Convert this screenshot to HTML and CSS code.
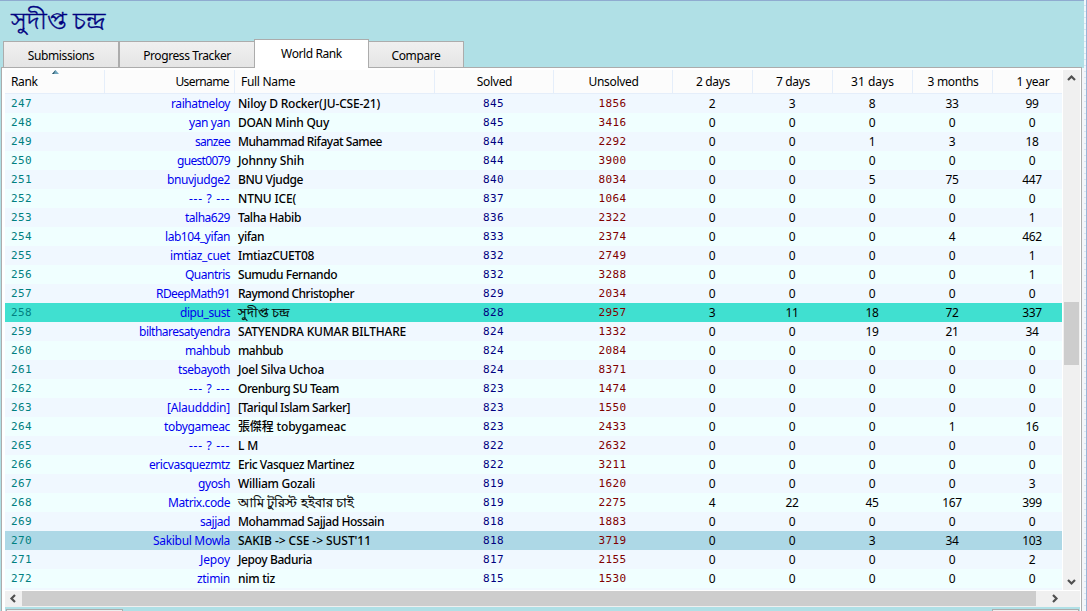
FILE: index.html
```html
<!DOCTYPE html>
<html lang="en">
<head>
<meta charset="utf-8">
<title>World Rank</title>
<link rel="stylesheet" href="styles.css">
</head>
<body>
<div class="window">
  <header class="title" lang="bn">সুদীপ্ত চন্দ্র</header>
  <nav class="tabs">
    <div class="tab tab-submissions">Submissions</div>
    <div class="tab tab-progress">Progress Tracker</div>
    <div class="tab tab-world active">World Rank</div>
    <div class="tab tab-compare">Compare</div>
  </nav>
  <main class="panel">
    <div class="view">
      <section class="table">
        <div class="row head">
          <span class="rank">Rank<svg class="sort" width="7" height="4" viewBox="0 0 7 4"><path d="M3.5 0 7 4H0Z" fill="#6fa5bd"/><path d="M3.5 0 0 4H2Z" fill="#31596b"/></svg></span>
          <span class="user">Username</span>
          <span class="name">Full Name</span>
          <span class="tight">Solved</span>
          <span class="tight">Unsolved</span>
          <span class="tight">2 days</span>
          <span class="tight">7 days</span>
          <span>31 days</span>
          <span class="tight">3 months</span>
          <span class="tight">1 year</span>
        </div>
        <div class="body" id="rows"></div>
      </section>
      <aside class="vbar">
        <svg class="up" width="9" height="8" viewBox="0 0 9 8"><path d="M1 6 4.5 2.5 8 6" fill="none" stroke="#505050" stroke-width="2.2"/></svg>
        <div class="vthumb"></div>
        <svg class="down" width="9" height="8" viewBox="0 0 9 8"><path d="M1 2 4.5 5.5 8 2" fill="none" stroke="#505050" stroke-width="2.2"/></svg>
      </aside>
    </div>
    <div class="hbar">
      <svg class="left" width="8" height="9" viewBox="0 0 8 9"><path d="M6 1 2.5 4.5 6 8" fill="none" stroke="#505050" stroke-width="2.2"/></svg>
      <div class="hthumb"></div>
      <svg class="right" width="8" height="9" viewBox="0 0 8 9"><path d="M2 1 5.5 4.5 2 8" fill="none" stroke="#505050" stroke-width="2.2"/></svg>
    </div>
    <footer class="foot"><div class="foot-left"></div><div class="foot-right"></div></footer>
  </main>
</div>
<script src="rows.js"></script>
</body>
</html>
```
FILE: styles.css
```css
* { box-sizing: border-box; }
body {
  margin: 0;
  width: 1087px;
  height: 611px;
  overflow: hidden;
  font: 12px/19px "Noto Sans", "Open Sans", "Noto Sans CJK TC", sans-serif;
  color: #000;
  background: linear-gradient(#98b4d6, #98b4d6) right / 1px 100% no-repeat,
    repeating-linear-gradient(#f3f6fb 0 5px, #dae3f1 5px 6px);
}
.window {
  width: 1084px;
  height: 611px;
  display: flex;
  flex-direction: column;
  background: linear-gradient(#f3f6fa, #f3f6fa) 1082px 67px / 2px 544px no-repeat #b0e0e6;
  border-top: 1px solid #8fabd0;
}
.title {
  height: 37px;
  padding-left: 11px;
  font-size: 23.7px;
  line-height: 38px;
  color: #000080;
  -webkit-text-stroke: 0.3px #000080;
  white-space: nowrap;
}
.tabs {
  height: 29px;
  display: flex;
  align-items: flex-end;
  padding-left: 3px;
}
.tab {
  height: 26px;
  border: 1px solid #acacac;
  border-bottom: 0;
  background: linear-gradient(#f0f0f0, #e5e5e5);
  line-height: 27px;
  text-align: center;
  white-space: nowrap;
  letter-spacing: -0.4px;
}
.tab-submissions { width: 116px; }
.tab-progress { width: 135px; border-right: 0; }
.tab-world { width: 115px; }
.tab-compare { width: 95px; border-left: 0; }
.tab.active { height: 29px; margin-bottom: -1px; background: #fff; line-height: 27px; z-index: 1; letter-spacing: -0.4px; }
.panel {
  width: 1081px;
  margin-left: 1px;
  height: 544px;
  border: 1px solid #acacac;
  border-bottom: 0;
  background: #fff;
  padding: 2px 1px 0 3px;
}
.view { display: flex; height: 520px; }
.table { width: 1058px; overflow: hidden; }
.row {
  display: grid;
  grid-template-columns: 99px 130px 200px 119px 119px 80px 80px 80px 80px 80px;
  width: 1067px;
  height: 19px;
  white-space: nowrap;
  text-align: center;
}
.head { height: 24px; line-height: 24px; background: #fcfcfc; border-bottom: 1px solid #e5eefa; }
.head > span + span { border-left: 1px solid #e5eefa; }
.rank { position: relative; padding-left: 6px; text-align: left; }
.user { padding-right: 4px; text-align: right; }
.head .user { padding-right: 5px; letter-spacing: -0.6px; }
.name { padding-left: 4px; text-align: left; }
.head .name { padding-left: 6px; letter-spacing: -0.3px; }
.head .rank { letter-spacing: -0.4px; }
.head .tight { letter-spacing: -0.3px; padding-left: 1px; }
.sort { position: absolute; left: 47px; top: 0; }
.body { height: 496px; overflow: hidden; }
.body .row:nth-child(odd) { background: #f0f8ff; }
.body .row:nth-child(even) { background: #f0ffff; }
.body .row.me { background: #40e0d0; }
.body .row.friend { background: #add8e6; }
.body .rank, .solved, .unsolved {
  font-family: "DejaVu Sans Mono", monospace;
  font-size: 11px;
  letter-spacing: 0.38px;
}
.body .rank { color: #008080; }
.body .user { color: #0000ee; }
.body .name { font-weight: 500; }
.body .name:lang(bn) { font-size: 13.3px; -webkit-text-stroke: 0.25px #000; }
.solved { color: #000080; }
.unsolved { color: #800000; }
.count { letter-spacing: -0.4px; }
.vbar {
  width: 17px;
  display: flex;
  flex-direction: column;
  align-items: center;
  background: #f0f0f0;
  margin-left: 1px;
}
.up { margin-top: 4px; }
.vthumb { width: 15px; height: 63px; margin-top: 220px; background: #cdcdcd; }
.down { margin-top: 213px; }
.hbar { display: flex; align-items: center; height: 17px; padding-bottom: 1px; background: #f0f0f0; border-top: 1px solid #fff; }
.left { margin-left: 4px; }
.hthumb { width: 1014px; height: 15px; margin-left: 5px; background: #cdcdcd; }
.right { margin-left: 15px; }
.foot { display: flex; justify-content: space-between; height: 4px; padding: 2px 1px 0; background: #b0e0e6; }
.foot-left { width: 117px; border: 1px solid #acacac; border-bottom: 0; background: #eee; }
.foot-right { width: 87px; border: 1px solid #acacac; border-bottom: 0; background: #eee; }
```
FILE: rows.js
```js
// username, username width, full name, full name width, solved, unsolved, recent counts
const rows = [
  ["raihatneloy", 59, "Niloy D Rocker(JU-CSE-21)", 142, 845, 1856, 2, 3, 8, 33, 99],
  ["yan yan", 41, "DOAN Minh Quy", 91, 845, 3416, 0, 0, 0, 0, 0],
  ["sanzee", 35, "Muhammad Rifayat Samee", 144, 844, 2292, 0, 0, 1, 3, 18],
  ["guest0079", 53, "Johnny Shih", 66, 844, 3900, 0, 0, 0, 0, 0],
  ["bnuvjudge2", 63, "BNU Vjudge", 65, 840, 8034, 0, 0, 5, 75, 447],
  ["--- ? ---", 41, "NTNU ICE(", 58, 837, 1064, 0, 0, 0, 0, 0],
  ["talha629", 45, "Talha Habib", 63, 836, 2322, 0, 0, 0, 0, 1],
  ["lab104_yifan", 65, "yifan", 26, 833, 2374, 0, 0, 0, 4, 462],
  ["imtiaz_cuet", 60, "ImtiazCUET08", 76, 832, 2749, 0, 0, 0, 0, 1],
  ["Quantris", 45, "Sumudu Fernando", 99, 832, 3288, 0, 0, 0, 0, 1],
  ["RDeepMath91", 74, "Raymond Christopher", 116, 829, 2034, 0, 0, 0, 0, 0],
  ["dipu_sust", 50, "সুদীপ্ত চন্দ্র", 0, 828, 2957, 3, 11, 18, 72, 337],
  ["biltharesatyendra", 91, "SATYENDRA KUMAR BILTHARE", 168, 824, 1332, 0, 0, 19, 21, 34],
  ["mahbub", 45, "mahbub", 45, 824, 2084, 0, 0, 0, 0, 0],
  ["tsebayoth", 52, "Joel Silva Uchoa", 86, 824, 8371, 0, 0, 0, 0, 0],
  ["--- ? ---", 41, "Orenburg SU Team", 101, 823, 1474, 0, 0, 0, 0, 0],
  ["[Alaudddin]", 63, "[Tariqul Islam Sarker]", 112, 823, 1550, 0, 0, 0, 0, 0],
  ["tobygameac", 66, "張傑程 tobygameac", 108, 823, 2433, 0, 0, 0, 1, 16],
  ["--- ? ---", 41, "L M", 20, 822, 2632, 0, 0, 0, 0, 0],
  ["ericvasquezmtz", 81, "Eric Vasquez Martinez", 116, 822, 3211, 0, 0, 0, 0, 0],
  ["gyosh", 32, "William Gozali", 77, 819, 1620, 0, 0, 0, 0, 3],
  ["Matrix.code", 62, "আমি টুরিস্ট হইবার চাই", 0, 819, 2275, 4, 22, 45, 167, 399],
  ["sajjad", 30, "Mohammad Sajjad Hossain", 146, 818, 1883, 0, 0, 0, 0, 0],
  ["Sakibul Mowla", 77, "SAKIB -> CSE -> SUST'11", 133, 818, 3719, 0, 0, 3, 34, 103],
  ["Jepoy", 30, "Jepoy Baduria", 74, 817, 2155, 0, 0, 0, 0, 2],
  ["ztimin", 33, "nim tiz", 37, 815, 1530, 0, 0, 0, 0, 0],
];
const kinds = ["rank", "user", "name", "solved", "unsolved"];
const body = document.getElementById("rows");

// Spread the letters so that the text takes the given width.
function fit(cell, width) {
  const range = document.createRange();
  range.selectNodeContents(cell);
  const natural = range.getBoundingClientRect().width;
  cell.style.letterSpacing = (width - natural) / cell.textContent.length + "px";
}

rows.forEach(([user, userWidth, name, nameWidth, ...counts], i) => {
  const row = document.createElement("div");
  row.className = "row";
  if (user === "dipu_sust") row.classList.add("me");
  if (user === "Sakibul Mowla") row.classList.add("friend");
  const cells = [247 + i, user, name, ...counts].map((value, c) => {
    const cell = document.createElement("span");
    cell.className = kinds[c] || "count";
    cell.textContent = value;
    row.append(cell);
    return cell;
  });
  body.append(row);
  fit(cells[1], userWidth);
  if (nameWidth) fit(cells[2], nameWidth);
  else cells[2].lang = "bn";
});
const spare = document.createElement("div");
spare.className = "row";
body.append(spare);
```
